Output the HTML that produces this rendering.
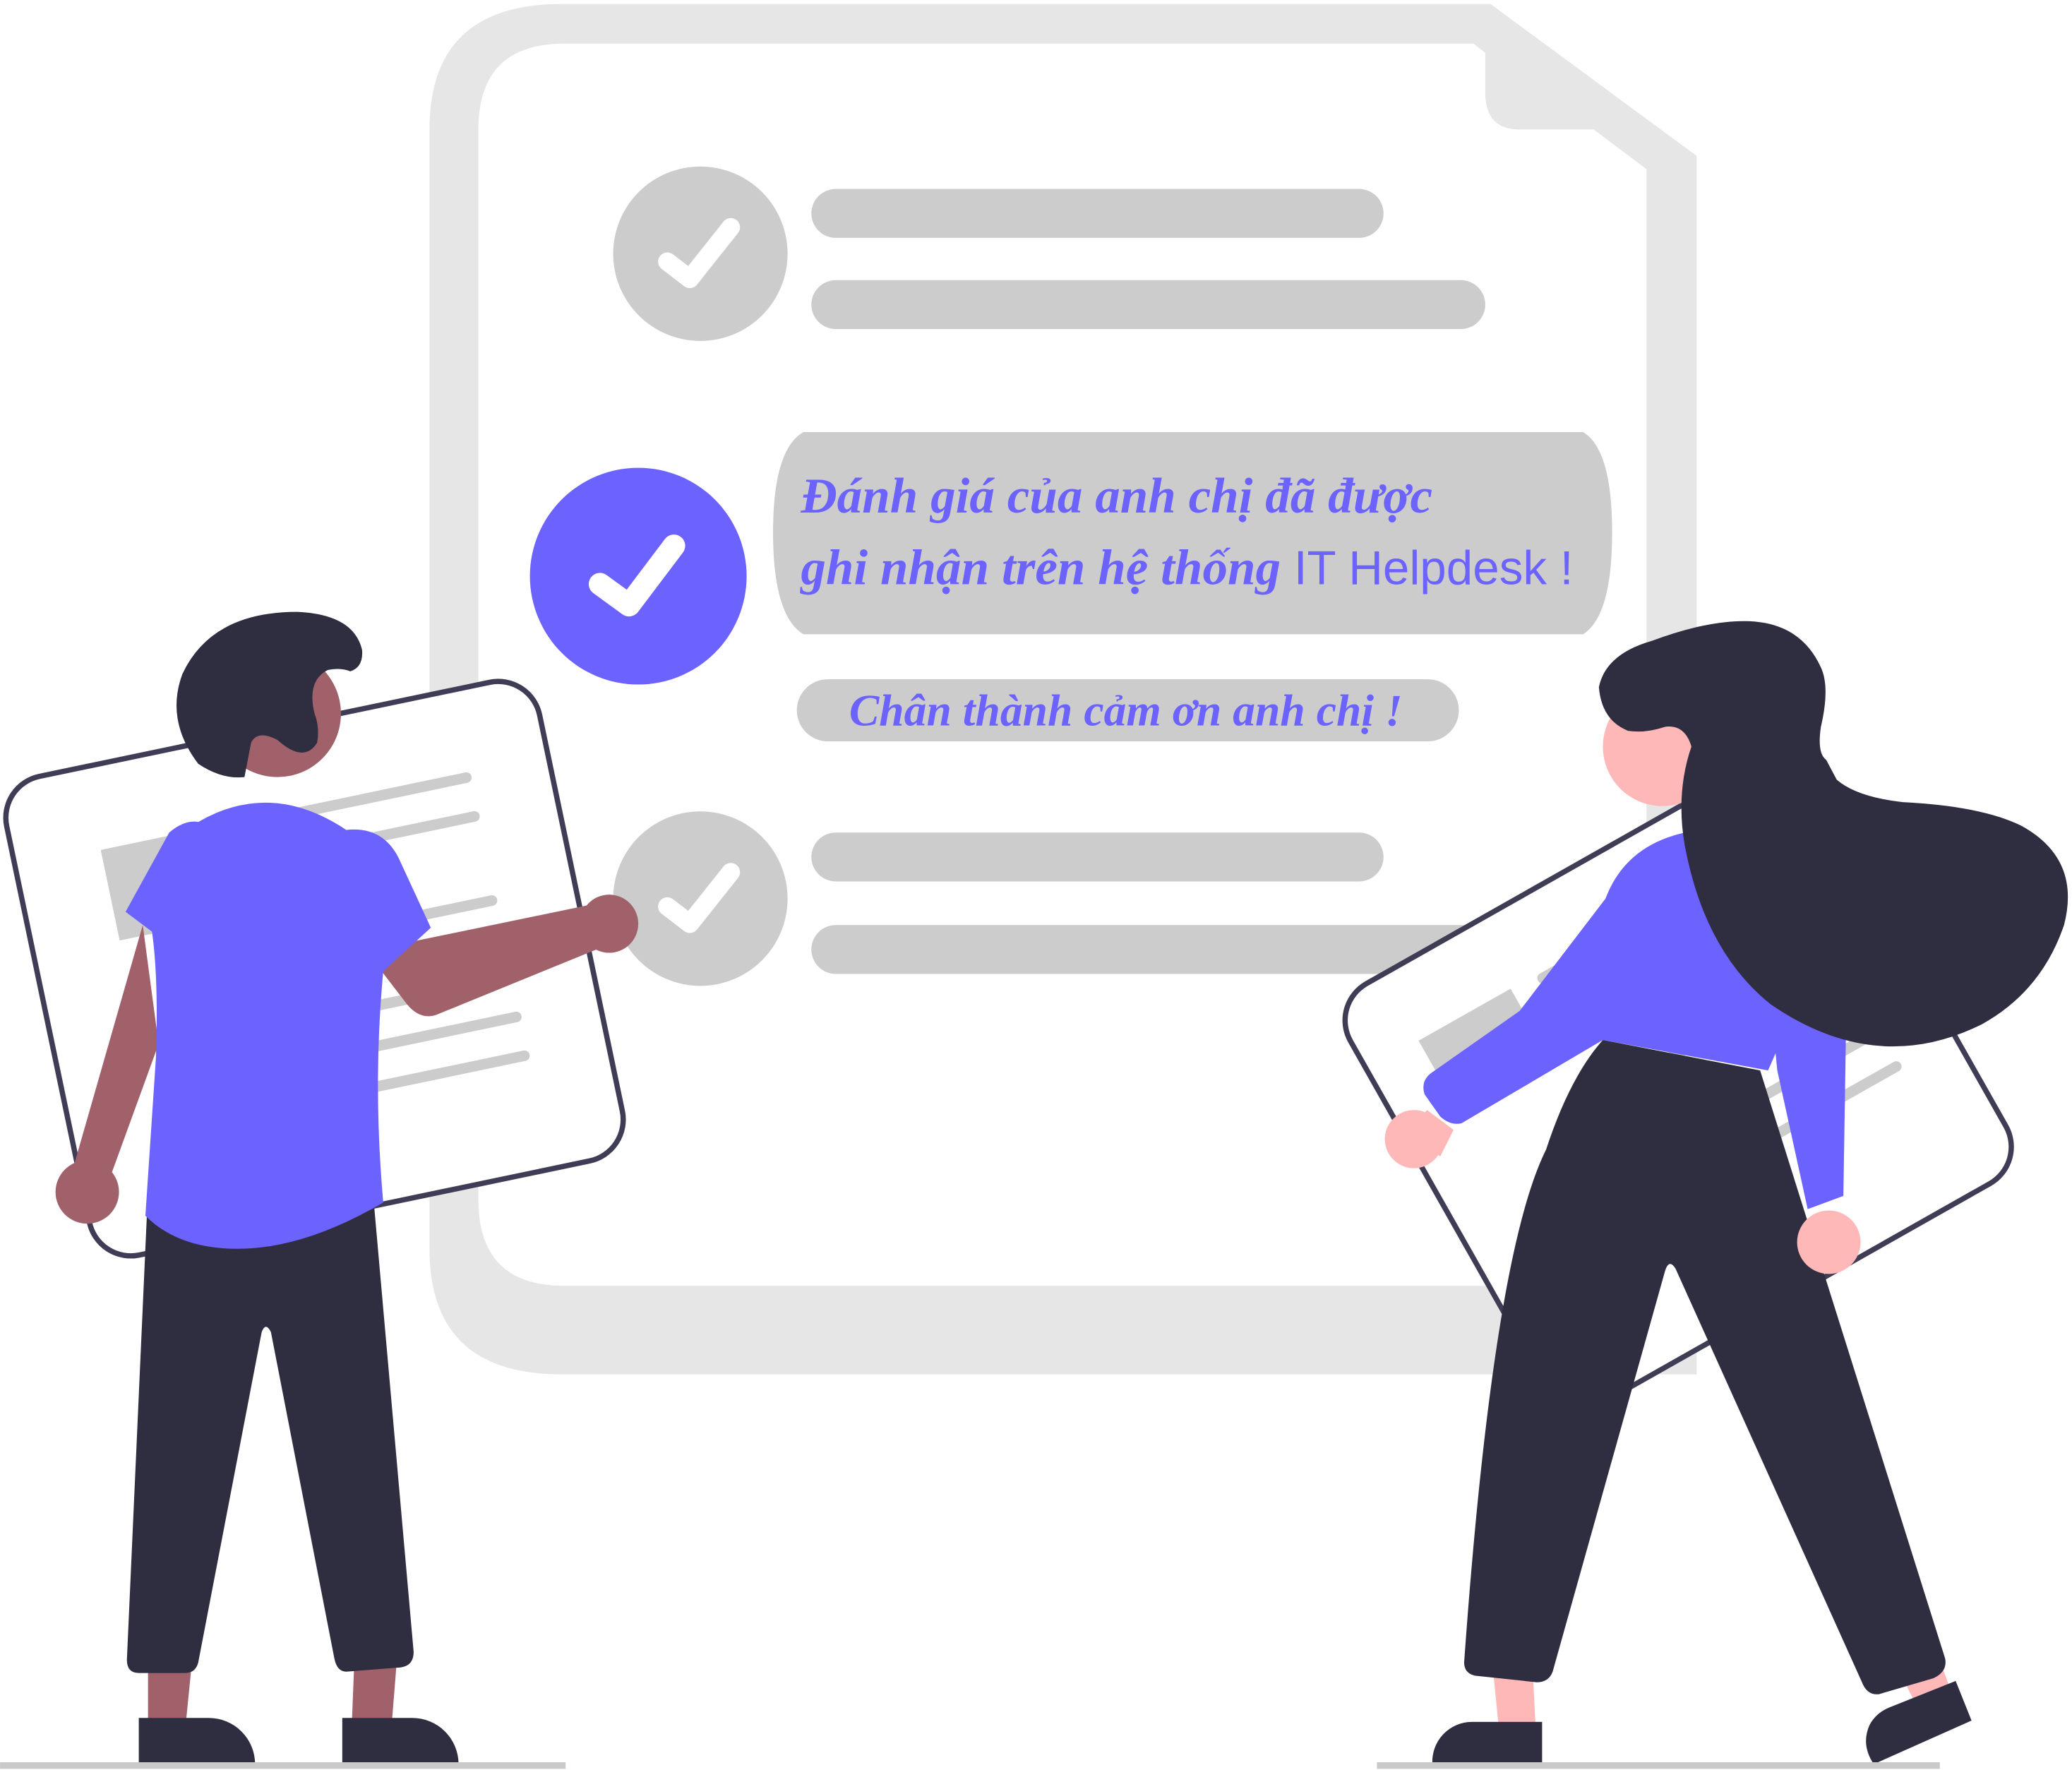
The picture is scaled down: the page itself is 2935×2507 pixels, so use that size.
<!DOCTYPE html>
<html><head><meta charset="utf-8"><style>
html,body{margin:0;padding:0;background:#fff;}
svg{display:block}
</style></head><body>
<svg width="2935" height="2507" viewBox="0 0 1568 1339.4" xmlns="http://www.w3.org/2000/svg">
<path d="M425 3 H1128 L1284 118 V1040 H425 Q325 1040 325 945 V98 Q325 3 425 3 Z" fill="#e6e6e6"/>
<path d="M427 33 H1115 L1124 40 V70 Q1124 98 1150 98 H1206 L1246 128 V973 H427 Q362 973 362 908 V98 Q362 33 427 33 Z" fill="#fff"/>
<circle cx="530" cy="192" r="66" fill="#ccc"/>
<path d="M505 198 L522 211 L553 172" stroke="#fff" stroke-width="14" fill="none" stroke-linecap="round" stroke-linejoin="round"/>
<rect x="614" y="143" width="433" height="37" rx="18.5" fill="#ccc"/>
<rect x="614" y="212" width="510" height="37" rx="18.5" fill="#ccc"/>
<circle cx="483" cy="436" r="82" fill="#6c63ff"/>
<path d="M454 442 L476 458 L510 413" stroke="#fff" stroke-width="17" fill="none" stroke-linecap="round" stroke-linejoin="round"/>
<path d="M608 327 H1198 Q1220 340 1220 403 Q1220 466 1198 480 H608 Q585 466 585 403 Q585 340 608 327 Z" fill="#ccc"/>
<text x="606" y="388" font-family="Liberation Serif, serif" font-style="italic" font-weight="bold" font-size="38" fill="#6c63ff">Đánh giá của anh chị đã được</text>
<text x="606" y="442" font-family="Liberation Serif, serif" font-style="italic" font-weight="bold" font-size="38" fill="#6c63ff">ghi nhận trên hệ thống<tspan font-family="Liberation Sans, sans-serif" font-style="normal" font-weight="normal" font-size="36"> IT Helpdesk !</tspan></text>
<rect x="603" y="514" width="501" height="47" rx="23.5" fill="#ccc"/>
<text x="852" y="549" text-anchor="middle" font-family="Liberation Serif, serif" font-style="italic" font-weight="bold" font-size="34" fill="#6c63ff">Chân thành cảm ơn anh chị !</text>
<circle cx="530" cy="680" r="66" fill="#ccc"/>
<path d="M505 686 L522 699 L553 660" stroke="#fff" stroke-width="14" fill="none" stroke-linecap="round" stroke-linejoin="round"/>
<rect x="614" y="630" width="433" height="37" rx="18.5" fill="#ccc"/>
<rect x="614" y="700" width="510" height="37" rx="18.5" fill="#ccc"/>

<g transform="rotate(-11.8 238 733)">
<rect x="32" y="548" width="412" height="370" rx="32" fill="#fff" stroke="#3f3d56" stroke-width="4"/>
<rect x="98" y="612" width="75" height="70" fill="#ccc"/>
<g stroke="#ccc" stroke-width="8" stroke-linecap="round">
<line x1="200" y1="615" x2="380" y2="615"/><line x1="200" y1="645" x2="380" y2="645"/>
<line x1="200" y1="710" x2="380" y2="710"/><line x1="200" y1="770" x2="380" y2="770"/>
<line x1="200" y1="800" x2="380" y2="800"/><line x1="200" y1="830" x2="380" y2="830"/>
</g></g>

<path d="M112 1260 H145 L140 1310 H112 Z" fill="#a0616a"/>
<path d="M268 1260 H300 L296 1310 H266 Z" fill="#a0616a"/>
<path d="M105 1300 H158 A35 35 0 0 1 193 1335 H105 Z" fill="#2f2e41"/>
<path d="M259 1300 H312 A35 35 0 0 1 347 1335 H259 Z" fill="#2f2e41"/>
<path d="M112 900 L282 900 L313 1250 Q313 1262 300 1262 L262 1265 Q255 1265 253 1255 L205 1008 Q201 1000 198 1008 L150 1258 Q148 1266 140 1266 L105 1266 Q96 1266 96 1256 Z" fill="#2f2e41"/>
<path d="M108 700 L55 885 L80 900 L120 790 Z" fill="#a0616a"/>
<circle cx="66" cy="902" r="24" fill="#a0616a"/>
<path d="M300 715 L445 685 L460 715 L330 768 Q318 772 308 760 L285 730 Z" fill="#a0616a"/>
<circle cx="461" cy="699" r="22" fill="#a0616a"/>
<path d="M150 622 Q205 590 262 628 Q290 625 302 650 L326 702 L290 735 Q282 820 290 910 Q230 945 180 945 Q135 945 110 920 L118 800 Q120 740 115 705 L95 690 L128 630 Q140 620 150 622 Z" fill="#6c63ff"/>
<circle cx="210" cy="540" r="48" fill="#a0616a"/>
<path d="M185 588 L190 562 Q195 552 210 560 Q230 578 240 562 Q242 550 238 540 Q232 515 248 507 Q258 505 265 508 Q275 505 274 492 Q268 465 225 463 Q160 463 138 510 Q125 545 150 578 Q168 590 185 588 Z" fill="#2f2e41"/>

<g transform="rotate(-29.5 1270 820)">
<rect x="1070" y="638" width="400" height="364" rx="32" fill="#fff" stroke="#3f3d56" stroke-width="4"/>
<rect x="1115" y="695" width="80" height="65" fill="#ccc"/>
<g stroke="#ccc" stroke-width="8" stroke-linecap="round">
<line x1="1220" y1="700" x2="1420" y2="700"/><line x1="1220" y1="730" x2="1420" y2="730"/>
<line x1="1220" y1="800" x2="1420" y2="800"/><line x1="1220" y1="860" x2="1420" y2="860"/>
<line x1="1220" y1="890" x2="1420" y2="890"/>
</g></g>

<path d="M1130 1265 L1160 1265 L1162 1305 H1134 Z" fill="#ffb8b8"/>
<path d="M1440 1270 L1470 1262 L1482 1295 L1455 1300 Z" fill="#ffb8b8"/>
<path d="M1114 1303 H1167 V1335 H1084 A30 30 0 0 1 1114 1303 Z" fill="#2f2e41"/>
<path d="M1430 1292 L1480 1272 L1492 1302 L1418 1335 Q1408 1320 1415 1305 Q1420 1296 1430 1292 Z" fill="#2f2e41"/>
<path d="M1213 787 L1332 810 L1472 1255 Q1474 1265 1463 1270 L1422 1282 Q1414 1283 1410 1275 L1268 960 Q1263 952 1260 962 L1175 1265 Q1172 1273 1163 1273 L1116 1268 Q1108 1266 1108 1258 Q1130 950 1170 870 Q1188 815 1213 787 Z" fill="#2f2e41"/>
<circle cx="1384" cy="940" r="24" fill="#ffb8b8"/>
<path d="M1340 760 L1397 780 L1395 905 L1368 915 L1345 810 Z" fill="#6c63ff"/>
<circle cx="1070" cy="862" r="22" fill="#ffb8b8"/>
<path d="M1080 840 L1060 860 L1090 875 L1100 855 Z" fill="#ffb8b8"/>
<path d="M1215 680 Q1230 640 1275 630 Q1320 628 1340 660 L1360 760 L1338 810 L1213 787 L1106 850 Q1098 852 1090 845 L1078 828 Q1075 818 1083 812 L1150 765 Z" fill="#6c63ff"/>
<circle cx="1258" cy="565" r="45" fill="#ffb8b8"/>
<path d="M1280 565 Q1268 600 1275 640 Q1290 720 1340 760 Q1420 815 1500 775 Q1545 750 1562 700 Q1575 650 1530 625 Q1500 610 1440 607 Q1405 603 1390 590 L1382 575 Q1375 570 1378 550 Q1385 520 1378 505 Q1362 470 1320 470 Q1290 470 1250 485 Q1215 495 1210 520 Q1212 545 1232 553 Q1245 555 1260 550 Q1275 548 1280 565 Z" fill="#2f2e41"/>

<line x1="0" y1="1336" x2="428" y2="1336" stroke="#cacaca" stroke-width="5"/>
<line x1="1042" y1="1336" x2="1468" y2="1336" stroke="#cacaca" stroke-width="5"/>
</svg>
</body></html>
